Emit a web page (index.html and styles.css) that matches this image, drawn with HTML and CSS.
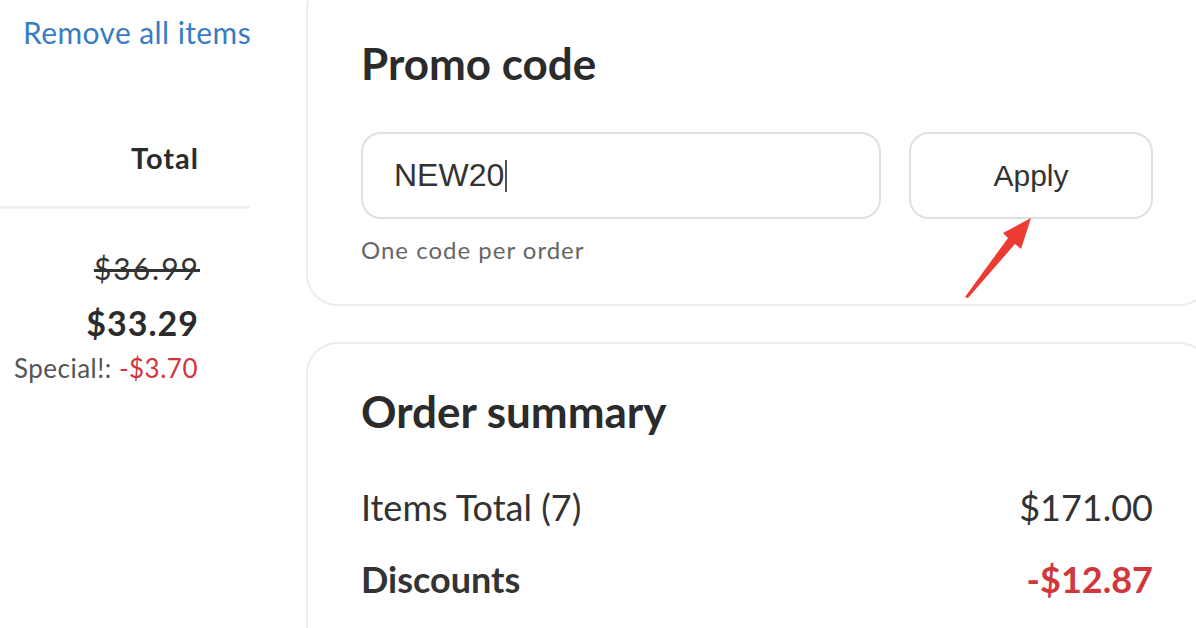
FILE: index.html
```html
<!DOCTYPE html>
<html lang="en">
<head>
  <meta charset="UTF-8" />
  <meta name="viewport" content="width=device-width, initial-scale=1.0"/>
  <title>Cart</title>
  <link rel="stylesheet" href="styles.css">
</head>
<body>
  <div class="cart">
    <div class="items">
      <a class="remove-all" href="#">Remove all items</a>
      <div class="col-head">Total</div>
      <div class="line-total">
        <div class="old-price">$36.99</div>
        <div class="new-price">$33.29</div>
        <div class="special">Special!: <span class="minus">-$3.70</span></div>
      </div>
    </div>

    <div class="side">
      <div class="card promo">
        <h2>Promo code</h2>
        <div class="promo-row">
          <div class="promo-input">NEW20<span class="caret"></span></div>
          <button class="apply">Apply</button>
        </div>
        <p class="hint">One code per order</p>
        <svg class="pointer" width="100" height="100" viewBox="0 0 100 100">
          <path d="M17 89 L60 30 L55 25 L83 10 L73 41 L67 36 L20 90 Z" fill="#ec3b32"/>
        </svg>
      </div>

      <div class="card summary">
        <h2>Order summary</h2>
        <div class="sum-row">
          <span>Items Total (7)</span>
          <span>$171.00</span>
        </div>
        <div class="sum-row strong">
          <span>Discounts</span>
          <span class="minus">-$12.87</span>
        </div>
      </div>
    </div>
  </div>
</body>
</html>
```

FILE: styles.css
```css
* { box-sizing: border-box; }

body {
  margin: 0;
  font-family: 'Lato', 'Noto Sans', sans-serif;
  background: #fff;
  color: #2b2b2b;
  overflow: hidden;
  height: 100vh;
}

.cart {
  display: flex;
  gap: 56px;
  height: 100vh;
  overflow: hidden;
}

/* left column: cart items */
.items {
  width: 250px;
  flex-shrink: 0;
  text-align: right;
  padding-right: 52px;
}

.remove-all {
  display: block;
  text-align: left;
  margin: 14px 0 0 23px;
  font-size: 30px;
  letter-spacing: 0.4px;
  color: #3a7cc2;
  text-decoration: none;
  white-space: nowrap;
}

.col-head {
  margin: 90px -52px 0 0;
  padding: 0 51px 31px 0;
  font-size: 29px;
  font-weight: 700;
  letter-spacing: 1px;
  border-bottom: 3px solid #f2f2f2;
}

.line-total {
  padding-top: 41px;
}

.old-price {
  margin-right: -2px;
  font-size: 30px;
  letter-spacing: 2px;
  text-decoration: line-through;
  color: #333;
}

.new-price {
  margin: 16px -1px 0 0;
  font-size: 34px;
  letter-spacing: 1px;
  font-weight: 700;
}

.special {
  margin: 9px 0 0 -60px;
  font-size: 26px;
  letter-spacing: 0.5px;
  color: #555;
  white-space: nowrap;
}

.minus {
  color: #d0363c;
}

/* right column: promo + summary */
.side {
  width: 905px;
  flex-shrink: 0;
  display: flex;
  flex-direction: column;
  gap: 36px;
}

.card {
  border: 2px solid #ececec;
  border-radius: 32px;
  padding: 0 53px;
}

.card h2 {
  margin: 0;
  font-size: 44px;
  font-weight: 700;
}

.promo {
  position: relative;
  margin-top: -24px;
  padding-top: 59px;
  padding-bottom: 40px;
}

.promo-row {
  display: flex;
  gap: 28px;
  margin-top: 43px;
}

.promo-input,
.apply {
  height: 87px;
  border: 2px solid #e0e0e0;
  border-radius: 20px;
  background: #fff;
  font-family: 'Liberation Sans', Arial, sans-serif;
  color: #333;
}

.promo-input {
  width: 520px;
  display: flex;
  align-items: center;
  padding-left: 31px;
  font-size: 32px;
}

.caret {
  display: inline-block;
  width: 2px;
  height: 32px;
  background: #555;
  margin-left: 1px;
}

.apply {
  width: 244px;
  font-size: 30px;
  cursor: pointer;
}

.hint {
  margin: 16px 0 0;
  font-size: 24px;
  letter-spacing: 1px;
  color: #666;
}

.pointer {
  position: absolute;
  left: 640px;
  top: 230px;
}

.summary {
  flex-shrink: 0;
  padding-top: 41px;
  padding-bottom: 40px;
}

.summary h2 {
  margin-bottom: 48px;
}

.sum-row {
  display: flex;
  justify-content: space-between;
  width: 792px;
  font-size: 36px;
  margin-bottom: 28px;
  color: #333;
}

.sum-row.strong {
  font-weight: 700;
}
```
